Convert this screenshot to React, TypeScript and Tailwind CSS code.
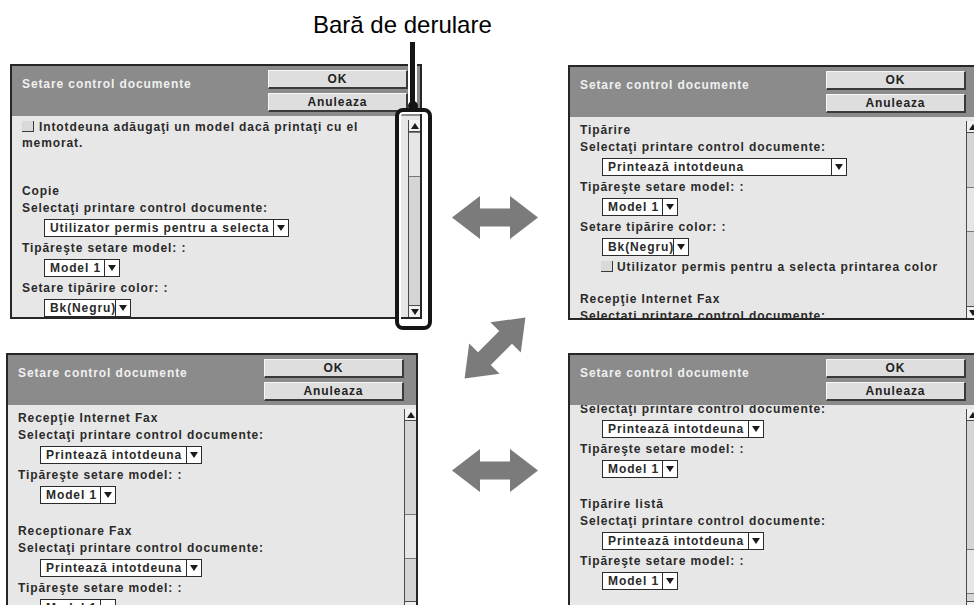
import React from 'react';

// small black triangle used in dropdowns and scroll buttons
const Tri = ({ up = false }: { up?: boolean }) => (
  <svg width="8" height="6" viewBox="0 0 8 6">
    <polygon points={up ? '0,6 4,0 8,6' : '0,0 8,0 4,6'} fill="#1c1c1c" />
  </svg>
);

const Label = ({ children, className = '' }: { children: React.ReactNode; className?: string }) => (
  <div className={`h-[17px] leading-[17px] whitespace-nowrap pl-[10px] ${className}`}>{children}</div>
);

const Select = ({ value, className = '' }: { value: string; className?: string }) => (
  <div className={`mt-[2px] mb-[3px] ml-[32px] h-[18px] flex border border-[#2b2b2b] bg-white ${className}`}>
    <div className="flex-1 pl-[5px] leading-[16px] overflow-hidden whitespace-nowrap">{value}</div>
    <div className="w-[15px] border-l border-[#2b2b2b] flex items-center justify-center">
      <Tri />
    </div>
  </div>
);

const Check = () => (
  <span className="inline-block w-[12px] h-[11px] bg-[#d9d9d9] border-r border-b border-[#3a3a3a] align-[-1px]" />
);

const Button = ({ children }: { children: React.ReactNode }) => (
  <div className="w-[140px] h-[19px] bg-[#dedede] border-t border-l border-t-[#f6f6f6] border-l-[#f6f6f6] border-r-2 border-b-2 border-r-[#3a3a3a] border-b-[#3a3a3a] text-center leading-[16px] text-[#222]">
    {children}
  </div>
);

const Scrollbar = ({ thumb }: { thumb: string }) => (
  <div className="w-[12px] mt-[4px] flex flex-col bg-[#d5d5d5] border-l border-[#4a4a4a]">
    <div className="h-[12px] bg-[#f1f1f1] border-b border-[#4a4a4a] flex items-center justify-center">
      <Tri up />
    </div>
    <div className="flex-1 flex flex-col">
      <div className={`h-[45px] bg-[#e6e6e6] border-b border-t border-[#777] ${thumb}`} />
    </div>
    <div className="h-[12px] bg-[#f1f1f1] border-t border-[#4a4a4a] flex items-center justify-center">
      <Tri />
    </div>
  </div>
);

const Panel = ({
  className,
  thumb,
  children,
}: {
  className: string;
  thumb: string;
  children: React.ReactNode;
}) => (
  <div
    className={`w-[412px] shrink-0 border-2 border-[#262626] bg-[#e7e7e7] flex flex-col overflow-hidden text-[12px] font-bold tracking-[0.9px] text-[#2a2a2a] ${className}`}
  >
    <div className="h-[50px] shrink-0 bg-[#8b8b8b] flex justify-between">
      <div className="pl-[10px] pt-[10px] leading-[17px] text-[#f0f0f0] whitespace-nowrap">Setare control documente</div>
      <div className="pt-[4px] pr-[12px] flex flex-col gap-[4px]">
        <Button>OK</Button>
        <Button>Anuleaza</Button>
      </div>
    </div>
    <div className="flex-1 flex min-h-0">
      <div className="flex-1 overflow-hidden">{children}</div>
      <Scrollbar thumb={thumb} />
    </div>
  </div>
);

const HArrow = () => (
  <svg width="86" height="43" viewBox="0 0 86 43">
    <polygon points="0,21.5 28,0 28,12.5 58,12.5 58,0 86,21.5 58,43 58,30.5 28,30.5 28,43" fill="#7b7b7b" />
  </svg>
);

const DArrow = () => (
  <svg width="62" height="62" viewBox="-31 -31 62 62">
    <polygon
      transform="rotate(-45)"
      points="-43,0 -15,-21.5 -15,-9 15,-9 15,-21.5 43,0 15,21.5 15,9 -15,9 -15,21.5"
      fill="#7b7b7b"
    />
  </svg>
);

export default function App() {
  return (
    <div className="w-[974px] h-[605px] overflow-hidden bg-white font-['Liberation_Sans',Arial,sans-serif]">
      <div className="h-[64px] pl-[313px] pt-[11px] text-[24px] leading-[28px] text-black">Bară de derulare</div>

      <div className="flex">
        {/* left column */}
        <div className="w-[422px] shrink-0 flex flex-col">
          <div className="relative ml-[10px]">
            <Panel className="h-[255px]" thumb="mt-0">
              <div className="pt-[3px] pl-[10px] leading-[16px]">
                <Check />
                <span className="ml-[5px]">Intotdeuna adăugaţi un model dacă printaţi cu el</span>
                <br />
                memorat.
              </div>
              <Label className="mt-[32px]">Copie</Label>
              <Label>Selectaţi printare control documente:</Label>
              <Select value="Utilizator permis pentru a selecta" className="w-[245px]" />
              <Label>Tipăreşte setare model: :</Label>
              <Select value="Model 1" className="w-[76px]" />
              <Label>Setare tipărire color: :</Label>
              <Select value="Bk(Negru)" className="w-[87px]" />
            </Panel>

            {/* scroll bar callout */}
            <div className="absolute left-[398px] top-[-22px] w-[9px] h-[68px] bg-[#151515] border-x-2 border-white" />
            <div className="absolute left-[398px] top-[37px] w-[10px] h-[10px] rounded-full bg-[#151515]" />
            <div className="absolute left-[385px] top-[44px] w-[37px] h-[222px] rounded-[8px] border-[4px] border-[#151515] shadow-[inset_0_0_0_2px_white]" />
          </div>

          <div className="ml-[6px] mt-[34px]">
            <Panel className="h-[262px]" thumb="mt-[93px]">
              <Label className="mt-[5px]">Recepţie Internet Fax</Label>
              <Label>Selectaţi printare control documente:</Label>
              <Select value="Printează intotdeuna" className="w-[162px]" />
              <Label>Tipăreşte setare model: :</Label>
              <Select value="Model 1" className="w-[76px]" />
              <Label className="mt-[19px]">Receptionare Fax</Label>
              <Label>Selectaţi printare control documente:</Label>
              <Select value="Printează intotdeuna" className="w-[162px]" />
              <Label>Tipăreşte setare model: :</Label>
              <Select value="Model 1" className="w-[76px]" />
            </Panel>
          </div>
        </div>

        {/* arrows */}
        <div className="w-[146px] shrink-0 flex flex-col items-center">
          <div className="mt-[132px]">
            <HArrow />
          </div>
          <div className="mt-[78px]">
            <DArrow />
          </div>
          <div className="mt-[70px]">
            <HArrow />
          </div>
        </div>

        {/* right column */}
        <div className="w-[412px] shrink-0 flex flex-col">
          <div className="mt-[1px]">
            <Panel className="h-[255px]" thumb="mt-[54px]">
              <Label className="mt-[5px]">Tipărire</Label>
              <Label>Selectaţi printare control documente:</Label>
              <Select value="Printează intotdeuna" className="w-[245px]" />
              <Label>Tipăreşte setare model: :</Label>
              <Select value="Model 1" className="w-[76px]" />
              <Label>Setare tipărire color: :</Label>
              <Select value="Bk(Negru)" className="w-[87px]" />
              <div className="h-[17px] leading-[17px] pl-[31px] whitespace-nowrap">
                <Check />
                <span className="ml-[4px]">Utilizator permis pentru a selecta printarea color</span>
              </div>
              <Label className="mt-[15px]">Recepţie Internet Fax</Label>
              <Label>Selectaţi printare control documente:</Label>
            </Panel>
          </div>
          <div className="mt-[33px]">
            <Panel className="h-[262px]" thumb="mt-[128px]">
              <Label className="-mt-[4px]">Selectaţi printare control documente:</Label>
              <Select value="Printează intotdeuna" className="w-[162px]" />
              <Label>Tipăreşte setare model: :</Label>
              <Select value="Model 1" className="w-[76px]" />
              <Label className="mt-[18px]">Tipărire listă</Label>
              <Label>Selectaţi printare control documente:</Label>
              <Select value="Printează intotdeuna" className="w-[162px]" />
              <Label>Tipăreşte setare model: :</Label>
              <Select value="Model 1" className="w-[76px]" />
            </Panel>
          </div>
        </div>
      </div>
    </div>
  );
}
